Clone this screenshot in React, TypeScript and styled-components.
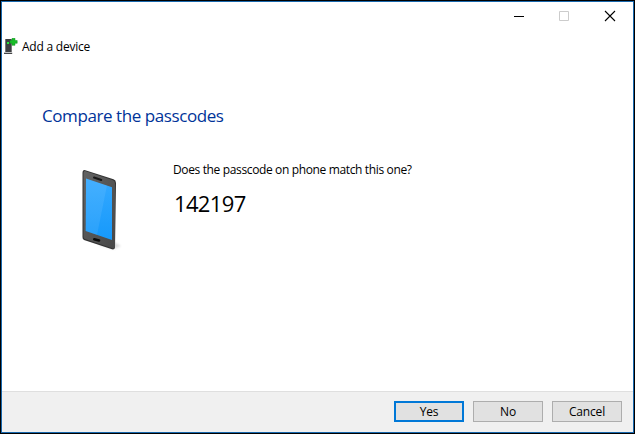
import React from "react";
import styled, { createGlobalStyle } from "styled-components";

const GlobalStyle = createGlobalStyle`
  * { box-sizing: border-box; }
  body { margin: 0; background: #000; overflow: hidden; }
`;

const Dialog = styled.div`
  width: 635px;
  height: 434px;
  border: 1px solid #000;
  background: #fff;
  color: #000;
  font-family: "Open Sans", "Noto Sans", sans-serif;
  font-size: 12px;
  line-height: 16px;
`;

const Frame = styled.div`
  height: 100%;
  border: 1px solid #1868ad;
  display: flex;
  flex-direction: column;
`;

const TitleBar = styled.div`
  height: 29px;
  display: flex;
  justify-content: flex-end;
`;

const Caption = styled.div`
  width: 45px;
  height: 28px;
  display: flex;
  svg { display: block; }
`;

const Header = styled.div`
  height: 30px;
  display: flex;
  align-items: center;
  padding: 2px 0 0 1px;
  gap: 3px;
`;

const Label = styled.span<{ $spacing?: number }>`
  white-space: nowrap;
  letter-spacing: ${(p) => p.$spacing ?? 0}px;
`;

const Content = styled.main`
  flex: 1;
  padding: 43px 40px 0;
`;

const Heading = styled.h1`
  margin: 0;
  height: 24px;
  font-size: 17px;
  line-height: 24px;
  font-weight: 400;
  color: #003399;
`;

const Body = styled.div`
  display: flex;
  padding: 32px 0 0 28px;
`;

const Message = styled.div`
  padding: 2px 0 0 43px;
`;

const Passcode = styled.div`
  padding: 10px 0 0 1px;
  font-size: 22px;
  line-height: 30px;
`;

const Footer = styled.footer`
  height: 41px;
  border-top: 1px solid #dfdfdf;
  background: #f0f0f0;
  display: flex;
  justify-content: flex-end;
  gap: 9px;
  padding: 9px 11px 0 0;
`;

const Button = styled.button<{ $primary?: boolean }>`
  width: 70px;
  height: 21px;
  padding: 0;
  border: ${(p) => (p.$primary ? "2px solid #0078d7" : "1px solid #adadad")};
  background: #e1e1e1;
  color: #000;
  font: inherit;
  line-height: 16px;
  letter-spacing: -0.15px;
`;

const DeviceIcon = () => (
  <svg width="16" height="18" viewBox="0 0 16 18">
    <path d="M2 1h6.7v13H2z" fill="#3e3f42" />
    <path d="M2 1h1v13H2z" fill="#77787a" />
    <path d="M1 14.7h8.2v1.2H1z" fill="#303134" />
    <path d="M4 4h2v2H4z" fill="#27e83a" />
    <path d="M9 .3h3v2.2h2.2v2.8H12v2H9v-2H7V2.5h2z" fill="#18bd28" stroke="#119221" strokeWidth=".5" />
  </svg>
);

const PhoneIcon = () => (
  <svg width="60" height="96" viewBox="0 0 60 96">
    <defs>
      <linearGradient id="case" x1="0" y1="0" x2="1" y2="1">
        <stop stopColor="#626262" />
        <stop offset="1" stopColor="#484848" />
      </linearGradient>
      <linearGradient id="screen" x1="0" y1="0" x2="0" y2="1">
        <stop stopColor="#35a9ff" />
        <stop offset="1" stopColor="#1699fb" />
      </linearGradient>
      <filter id="shade" x="-30%" y="-100%" width="160%" height="300%">
        <feGaussianBlur stdDeviation="1.3" />
      </filter>
    </defs>
    <path d="M28 85L44 89L51 86L42 81Z" fill="#777" opacity=".25" filter="url(#shade)" />
    <path d="M14.5 10Q12.5 10 12.5 13V77Q12.3 79 14 80L42 89.3Q45 90 45 87L46 23Q46 20 43.5 19.3Z" fill="#333" />
    <path d="M15 11Q13.5 11 13.5 13V76.5Q13.5 78.5 15 79L42.5 88.3Q45 89 45 86.5V23.5Q45 21 43 20.3Z" fill="url(#case)" />
    <path d="M16 18.5L42 27.3V80L15.7 71Z" fill="url(#screen)" />
    <path d="M16 18.5L37 25.6L27 75L15.7 71Z" fill="#fff" opacity=".08" />
    <path d="M24 17.5L31.3 20" stroke="#171717" strokeWidth="2" strokeLinecap="round" />
    <path d="M24.3 79.3L29 80.5" stroke="#090909" strokeWidth="2.6" strokeLinecap="round" />
  </svg>
);

export default function App() {
  return (
    <>
      <GlobalStyle />
      <Dialog>
        <Frame>
          <TitleBar>
            <Caption><svg width="45" height="28"><path d="M16 14.5h10" stroke="#000" /></svg></Caption>
            <Caption><svg width="45" height="28"><path d="M16.5 9.5h9v9h-9z" fill="none" stroke="#ccc" /></svg></Caption>
            <Caption><svg width="45" height="28"><path d="M17 9l10 10M27 9L17 19" stroke="#000" strokeWidth="1.1" /></svg></Caption>
          </TitleBar>
          <Header><DeviceIcon /><Label $spacing={-0.22}>Add a device</Label></Header>
          <Content>
            <Heading><Label $spacing={-0.42}>Compare the passcodes</Label></Heading>
            <Body>
              <PhoneIcon />
              <Message>
                <Label $spacing={-0.36}>Does the passcode on phone match this one?</Label>
                <Passcode><Label $spacing={-0.65}>142197</Label></Passcode>
              </Message>
            </Body>
          </Content>
          <Footer>
            <Button $primary>Yes</Button>
            <Button>No</Button>
            <Button>Cancel</Button>
          </Footer>
        </Frame>
      </Dialog>
    </>
  );
}
